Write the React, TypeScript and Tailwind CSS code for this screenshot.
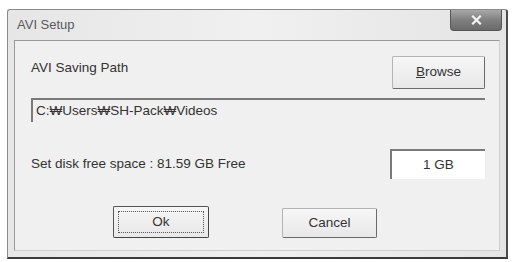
import React from 'react';

const font = { fontFamily: '"Liberation Sans", Arial, sans-serif' };

const Btn: React.FC<{ label: React.ReactNode; w: string; h: string; focus?: boolean }> = ({ label, w, h, focus }) => (
  <div
    className={`${w} ${h} flex items-center justify-center bg-gradient-to-b from-[#f6f6f6] to-[#e8e8e8] border rounded-[2px] text-[13.5px] text-[#333] ${
      focus ? 'border-[#555] border-r-[#444] border-b-[#444]' : 'border-[#b4b4b4] border-r-[#6a6a6a] border-b-[#6a6a6a]'
    }`}
  >
    {focus ? (
      <div className="w-[calc(100%-8px)] h-[calc(100%-8px)] border border-dotted border-[#555] flex items-center justify-center">
        {label}
      </div>
    ) : (
      label
    )}
  </div>
);

export default function App() {
  return (
    <div className="w-[512px] h-[262px] bg-white pl-[7px] pt-[9px]" style={font}>
      <div className="w-[501px] h-[250px] flex flex-col bg-gradient-to-r from-[#e6e6e6] via-[#f0f0f0] to-[#e4e4e4] border border-[#8a8a8a] border-r-[#4a4a4a] border-b-[#3a3a3a] border-r-2 border-b-2 rounded-t-[3px]">
        {/* title bar */}
        <div className="h-[30px] flex items-start justify-between pl-[9px] pr-[4px]">
          <div className="text-[13px] text-[#5a5a5a] mt-[5px]">AVI Setup</div>
          <div className="w-[52px] h-[21px] rounded-b-[4px] bg-gradient-to-b from-[#a8a8a8] via-[#808080] to-[#6a6a6a] border border-[#555] border-t-0 flex items-center justify-center">
            <svg width="11" height="10" viewBox="0 0 11 10">
              <path d="M2 1.5 L9 8.5 M9 1.5 L2 8.5" stroke="#f4f4f4" strokeWidth="2.2" strokeLinecap="square" />
            </svg>
          </div>
        </div>
        {/* client area */}
        <div className="flex-1 ml-[6px] mr-[6px] mb-[6px] bg-[#f0f0f0] border border-[#9a9a9a] border-r-[#cfcfcf] border-b-[#cfcfcf] pl-[16px] pr-[14px] pt-[15px] text-[13.5px] text-[#333]">
          <div className="flex justify-between items-start h-[33px]">
            <div className="mt-[2px]">AVI Saving Path</div>
            <Btn w="w-[93px]" h="h-[33px]" label={<span><u>B</u>rowse</span>} />
          </div>
          <div className="mt-[9px] h-[24px] border-t-2 border-l-2 border-[#7a7a7a] flex items-center pl-[3px]">
            C:₩Users₩SH-Pack₩Videos
          </div>
          <div className="mt-[27px] flex justify-between items-center h-[30px]">
            <div>Set disk free space : 81.59 GB Free</div>
            <div className="w-[95px] h-[30px] bg-white border-t-2 border-l-2 border-[#7a7a7a] flex items-center justify-center">
              1 GB
            </div>
          </div>
          <div className="mt-[27px] flex items-start pl-[82px] gap-[73px]">
            <Btn w="w-[96px]" h="h-[32px]" focus label="Ok" />
            <div className="mt-[2px]">
              <Btn w="w-[95px]" h="h-[30px]" label="Cancel" />
            </div>
          </div>
        </div>
      </div>
    </div>
  );
}
